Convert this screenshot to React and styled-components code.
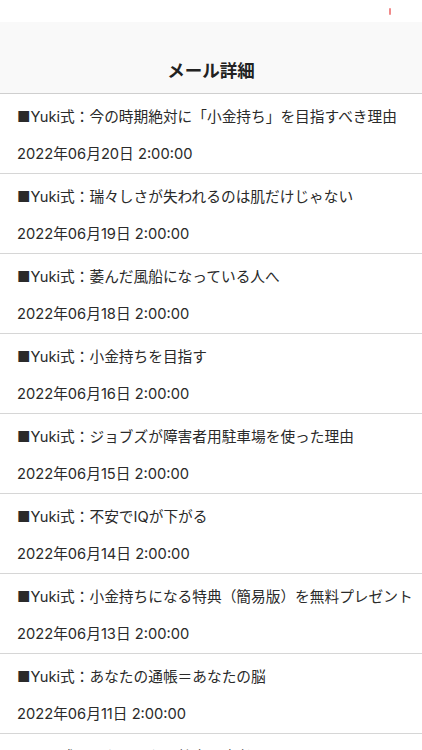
import React from "react";
import styled, { createGlobalStyle } from "styled-components";

const Global = createGlobalStyle`
  html, body { margin: 0; padding: 0; background: #fff; }
  body { font-family: Inter, "Noto Sans CJK JP", "Noto Sans", sans-serif; -webkit-font-smoothing: antialiased; }
  * { box-sizing: border-box; }
`;

const Screen = styled.div`
  width: 422px;
  height: 750px;
  overflow: hidden;
  display: flex;
  flex-direction: column;
  background: #fff;
`;

const StatusBar = styled.div`
  height: 22px;
  flex: none;
  background: #fff;
  display: flex;
  justify-content: flex-end;
  align-items: flex-start;
  padding: 8px 31px 0 0;
`;

const Tick = styled.span`
  display: block;
  width: 2px;
  height: 7px;
  background: #f08a8a;
  border-radius: 1px;
`;

const Header = styled.header`
  height: 72px;
  flex: none;
  background: #f9f9f9;
  border-bottom: 1.5px solid #cfcfcf;
  display: flex;
  align-items: flex-end;
  justify-content: center;
  padding-bottom: 10px;
`;

const Title = styled.h1`
  margin: 0;
  font-family: "Noto Sans CJK JP", sans-serif;
  font-size: 17.5px;
  font-weight: 700;
  color: #222;
  line-height: 26px;
`;

const List = styled.ul`
  list-style: none;
  margin: 0;
  padding: 0;
`;

const Row = styled.li`
  height: 80px;
  border-bottom: 1.5px solid #d6d6d6;
  padding: 11px 0 0 17px;
  display: flex;
  flex-direction: column;
`;

const Subject = styled.div`
  font-size: 14.7px;
  line-height: 24px;
  color: #2a2a2a;
  white-space: nowrap;
`;

const DateText = styled.div`
  margin-top: 13px;
  font-size: 14.7px;
  line-height: 24px;
  color: #2a2a2a;
  white-space: nowrap;
`;

const mails = [
  ["■Yuki式：今の時期絶対に「小金持ち」を目指すべき理由", "2022年06月20日 2:00:00"],
  ["■Yuki式：瑞々しさが失われるのは肌だけじゃない", "2022年06月19日 2:00:00"],
  ["■Yuki式：萎んだ風船になっている人へ", "2022年06月18日 2:00:00"],
  ["■Yuki式：小金持ちを目指す", "2022年06月16日 2:00:00"],
  ["■Yuki式：ジョブズが障害者用駐車場を使った理由", "2022年06月15日 2:00:00"],
  ["■Yuki式：不安でIQが下がる", "2022年06月14日 2:00:00"],
  ["■Yuki式：小金持ちになる特典（簡易版）を無料プレゼント", "2022年06月13日 2:00:00"],
  ["■Yuki式：あなたの通帳＝あなたの脳", "2022年06月11日 2:00:00"],
  ["■Yuki式：あなたたちへ特定医療者へのメール", "2022年06月10日 2:00:00"],
];

export default function App() {
  return (
    <Screen>
      <Global />
      <StatusBar>
        <Tick />
      </StatusBar>
      <Header>
        <Title>メール詳細</Title>
      </Header>
      <List>
        {mails.map(([s, d], i) => (
          <Row key={i}>
            <Subject>{s}</Subject>
            <DateText>{d}</DateText>
          </Row>
        ))}
      </List>
    </Screen>
  );
}
